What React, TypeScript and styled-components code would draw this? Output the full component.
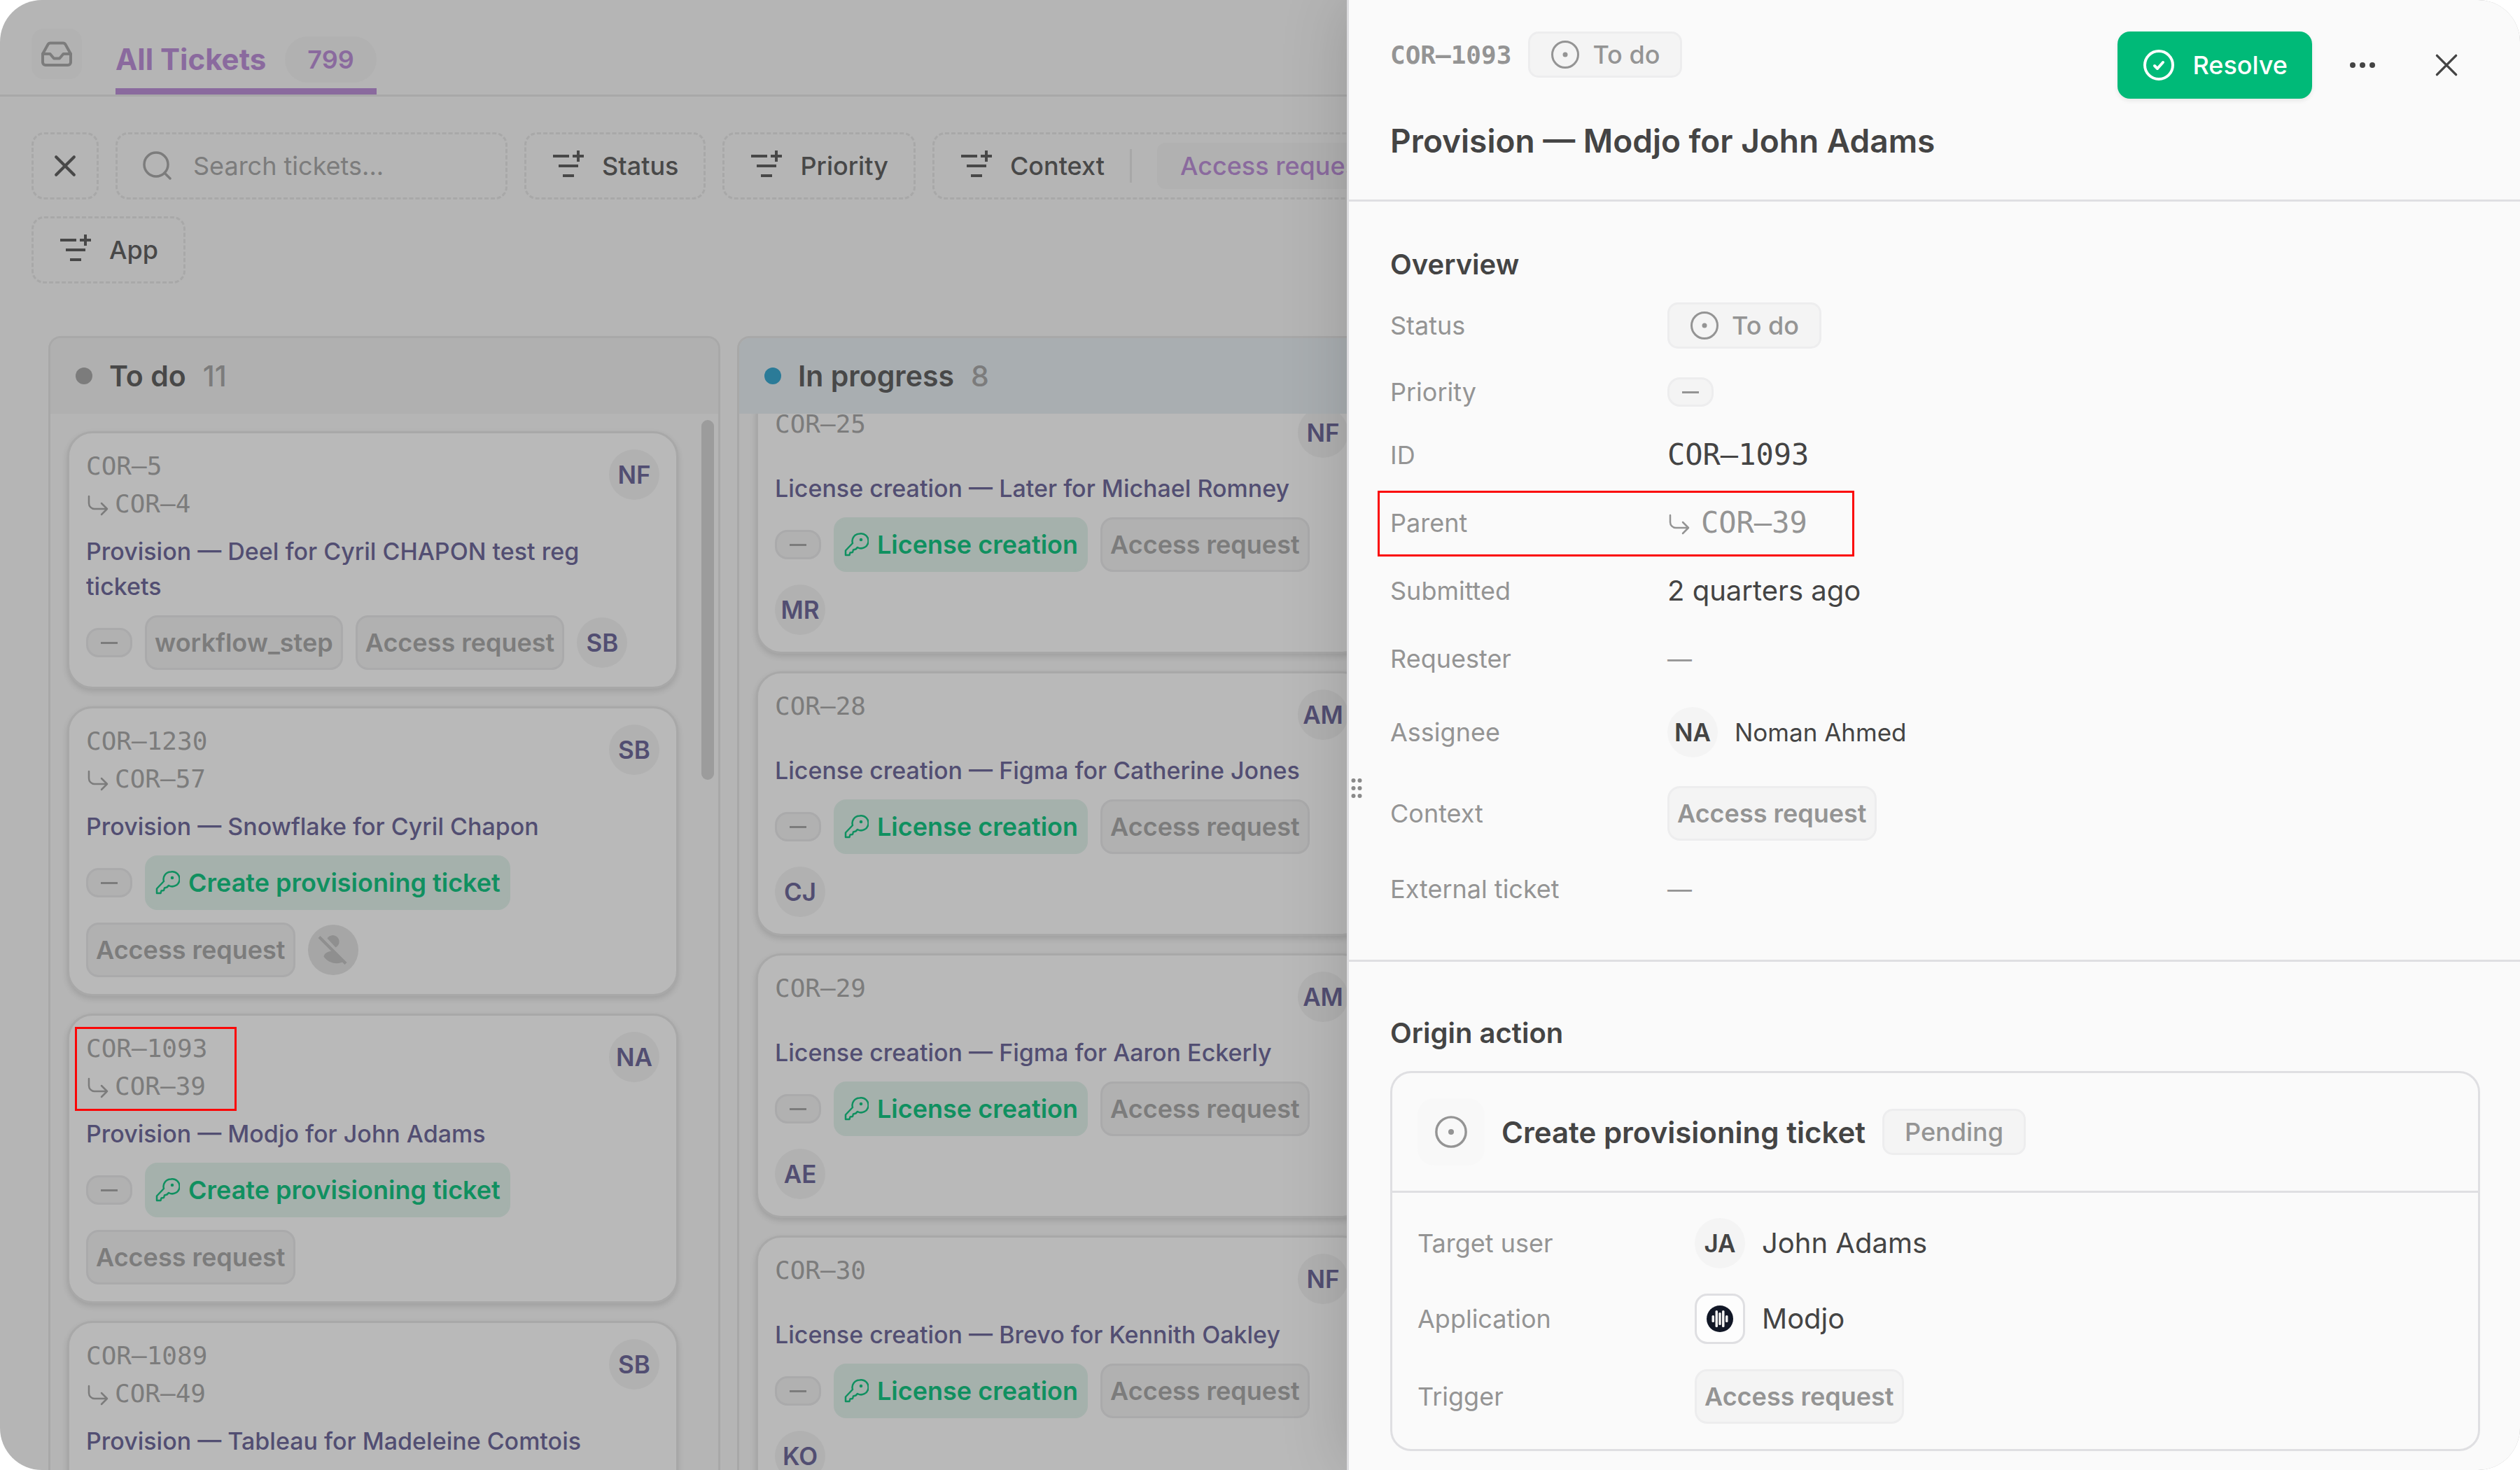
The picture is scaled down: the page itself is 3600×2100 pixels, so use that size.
import React, { useEffect, useRef } from "react";
import styled, { createGlobalStyle, css } from "styled-components";

const sans = `Inter, "Liberation Sans", sans-serif`;
const mono = `"DejaVu Sans Mono", "Liberation Mono", monospace`;

const dim = {
  page: "#b5b5b5",
  card: "#b9b9b9",
  fill: "#b1b1b1",
  line: "#a8a8a8",
  ink: "#484848",
  muted: "#7c7c7c",
  title: "#524e72",
  purple: "#8a6a9e",
  green: "#109060",
  greenFill: "#a5b1ac",
};

const lit = {
  page: "#fafafa",
  fill: "#f4f4f4",
  fillLine: "#ededee",
  line: "#dfdfe2",
  ink: "#444444",
  muted: "#949494",
  green: "#00ba78",
};

const GlobalStyle = createGlobalStyle`
  *, *::before, *::after { box-sizing: border-box; }
  body { margin: 0; background: #ffffff; font-family: ${sans}; }
  h1, h2, h3, p, dl, dt, dd { margin: 0; font-weight: inherit; }
  button, input { font: inherit; color: inherit; border: 0; background: none; padding: 0; margin: 0; }
  svg { display: block; flex: none; }
`;

/* ---------- shell ---------- */

const Frame = styled.div`
  position: relative;
  height: 100vh;
  overflow: hidden;
  border-radius: 60px;
  background: ${dim.page};
`;

const Board = styled.main`
  height: 100%;
  display: flex;
  flex-direction: column;
`;

/* ---------- header ---------- */

const TopBar = styled.header`
  flex: none;
  display: flex;
  align-items: flex-end;
  gap: 48px;
  height: 138px;
  padding: 0 45px;
  border-bottom: 3px solid ${dim.line};
`;

const InboxTile = styled.div`
  display: grid;
  place-items: center;
  width: 72px;
  height: 72px;
  margin-bottom: 22px;
  border-radius: 18px;
  background: #b2b2b2;
  color: ${dim.muted};
`;

const Tab = styled.a`
  display: flex;
  align-items: center;
  gap: 27px;
  padding-bottom: 8px;
  border-bottom: 9px solid ${dim.purple};
  color: ${dim.purple};
  font-size: 42px;
  line-height: 66px;
  font-weight: 700;
  text-decoration: none;
`;

const TabCount = styled.span`
  padding: 0 32px;
  border-radius: 33px;
  background: ${dim.fill};
  font-size: 36px;
  line-height: 66px;
  font-weight: 600;
`;

/* ---------- filters ---------- */

const Filters = styled.div`
  flex: none;
  display: grid;
  gap: 24px;
  padding: 51px 45px 75px;
`;

const FilterRow = styled.div`
  display: flex;
  gap: 24px;
`;

const dashed = css`
  height: 96px;
  border: 3px dashed ${dim.line};
  border-radius: 18px;
`;

const ClearButton = styled.button`
  ${dashed}
  width: 96px;
  display: grid;
  place-items: center;
  color: ${dim.ink};
`;

const SearchBox = styled.label`
  ${dashed}
  display: flex;
  align-items: center;
  gap: 27px;
  width: 560px;
  padding: 0 33px;
  color: ${dim.muted};
`;

const SearchInput = styled.input`
  flex: 1;
  min-width: 0;
  font-size: 36px;
  outline: none;
  &::placeholder {
    color: ${dim.muted};
    opacity: 1;
  }
`;

const FilterButton = styled.button`
  ${dashed}
  display: flex;
  align-items: center;
  gap: 24px;
  padding: 0 36px;
  color: ${dim.ink};
  font-size: 36px;
  font-weight: 500;
  white-space: nowrap;
`;

const FilterRule = styled.span`
  width: 3px;
  height: 48px;
  margin: 0 12px;
  background: ${dim.line};
`;

const FilterValue = styled.span`
  padding: 0 33px;
  border-radius: 12px;
  background: ${dim.fill};
  color: ${dim.purple};
  line-height: 66px;
`;

/* ---------- columns ---------- */

const Columns = styled.div`
  flex: 1;
  min-height: 0;
  display: flex;
  gap: 24px;
  padding-left: 69px;
`;

const ColumnBox = styled.section`
  flex: none;
  width: 960px;
  display: flex;
  flex-direction: column;
  overflow: hidden;
  border: 3px solid ${dim.line};
  border-bottom: 0;
  border-radius: 18px 18px 0 0;
`;

const ColumnHead = styled.header<{ $bg: string }>`
  flex: none;
  display: flex;
  align-items: center;
  gap: 24px;
  height: 108px;
  padding: 0 36px;
  background: ${(p) => p.$bg};
  font-size: 41px;
`;

const Dot = styled.span<{ $color: string }>`
  width: 24px;
  height: 24px;
  border-radius: 50%;
  background: ${(p) => p.$color};
`;

const ColumnName = styled.h2`
  color: ${dim.ink};
  font-size: 41px;
  font-weight: 600;
`;

const ColumnCount = styled.span`
  color: ${dim.muted};
  font-weight: 500;
`;

const ColumnBody = styled.div`
  flex: 1;
  min-height: 0;
  display: flex;
  overflow: hidden;
`;

const CardList = styled.div`
  flex: 1;
  min-width: 0;
  overflow: hidden;
  display: flex;
  flex-direction: column;
  gap: 25px;
  padding: 25px 33px 25px 24px;
`;

const ScrollTrack = styled.div`
  flex: none;
  width: 18px;
  margin: 9px 6px 0 0;
`;

const ScrollThumb = styled.div`
  height: 514px;
  border-radius: 9px;
  background: #9c9c9c;
`;

/* ---------- cards ---------- */

const Card = styled.article`
  flex: none;
  padding: 20px 24px 24px;
  border: 3px solid ${dim.line};
  border-radius: 36px;
  background: ${dim.card};
  box-shadow: 0 4px 8px rgba(0, 0, 0, 0.12);
`;

const CardHead = styled.div`
  display: flex;
  justify-content: space-between;
  align-items: flex-start;
`;

const RefGroup = styled.div`
  position: relative;
  color: ${dim.muted};
  font-family: ${mono};
  font-size: 36px;
  line-height: 54px;
`;

const RefLine = styled.div`
  display: flex;
  align-items: center;
  gap: 5px;
`;

const Avatar = styled.span<{ $bg?: string; $color?: string }>`
  flex: none;
  display: grid;
  place-items: center;
  width: 72px;
  height: 72px;
  border-radius: 50%;
  background: ${(p) => p.$bg ?? dim.fill};
  color: ${(p) => p.$color ?? dim.title};
  font-size: 35px;
  font-weight: 600;
`;

const CardAvatar = styled.div`
  padding: 3px 0;
`;

const CardTitle = styled.h3`
  margin: 16px 0;
  color: ${dim.title};
  font-size: 34px;
  line-height: 50px;
  font-weight: 500;
`;

const Chips = styled.div`
  display: flex;
  flex-wrap: wrap;
  align-items: center;
  gap: 18px;
`;

const Chip = styled.span<{ $tone?: "green" | "lit" }>`
  display: inline-flex;
  align-items: center;
  gap: 12px;
  height: 78px;
  padding: 0 11px;
  border: 3px solid #aaaaab;
  border-radius: 18px;
  background: ${dim.fill};
  color: ${dim.muted};
  font-size: 36px;
  font-weight: 600;
  white-space: nowrap;
  ${(p) =>
    p.$tone === "green" &&
    css`
      border-color: ${dim.greenFill};
      background: ${dim.greenFill};
      color: ${dim.green};
    `}
  ${(p) =>
    p.$tone === "lit" &&
    css`
      border-color: ${lit.fillLine};
      background: ${lit.fill};
      color: ${lit.muted};
    `}
`;

const PriorityPill = styled.span<{ $lit?: boolean }>`
  display: grid;
  place-items: center;
  width: 66px;
  height: 42px;
  border: 3px solid ${(p) => (p.$lit ? lit.fillLine : "#aaaaab")};
  border-radius: 18px;
  background: ${(p) => (p.$lit ? lit.fill : dim.fill)};
  color: ${(p) => (p.$lit ? lit.muted : dim.muted)};
  &::before {
    content: "";
    width: 24px;
    height: 3px;
    background: currentColor;
  }
`;

const Highlight = styled.span<{ $inset: string }>`
  position: absolute;
  inset: ${(p) => p.$inset};
  border: 3px solid #fb0606;
  pointer-events: none;
`;

/* ---------- drawer ---------- */

const Drawer = styled.aside`
  position: absolute;
  top: 0;
  right: 0;
  bottom: 0;
  width: min(100%, 1676px);
  border-left: 3px solid #dcdcdf;
  background: ${lit.page};
  color: ${lit.ink};
  box-shadow: 0 0 90px rgba(0, 0, 0, 0.16);
`;

const Grip = styled.button`
  position: absolute;
  left: 3px;
  top: 1112px;
  color: #8a8a8a;
`;

const DrawerHead = styled.header`
  padding: 45px 57px 51px 59px;
  border-bottom: 3px solid ${lit.line};
`;

const DrawerBar = styled.div`
  display: flex;
  align-items: flex-start;
  justify-content: space-between;
`;

const DrawerRef = styled.div`
  display: flex;
  align-items: center;
  gap: 24px;
  color: ${lit.muted};
  font-family: ${mono};
  font-size: 36px;
  font-weight: 700;
`;

const StatusChip = styled.span`
  display: inline-flex;
  align-items: center;
  gap: 18px;
  height: 66px;
  padding: 0 29px;
  border: 3px solid ${lit.fillLine};
  border-radius: 15px;
  background: ${lit.fill};
  color: ${lit.muted};
  font-family: ${sans};
  font-size: 36px;
  font-weight: 500;
  white-space: nowrap;
`;

const Actions = styled.div`
  display: flex;
  gap: 24px;
`;

const ResolveButton = styled.button`
  display: flex;
  align-items: center;
  gap: 24px;
  height: 96px;
  padding: 0 35px;
  border-radius: 18px;
  background: ${lit.green};
  color: #ffffff;
  font-size: 36px;
  font-weight: 500;
  box-shadow: 0 3px 6px rgba(0, 0, 0, 0.08);
`;

const IconButton = styled.button`
  display: grid;
  place-items: center;
  width: 96px;
  height: 96px;
  color: ${lit.ink};
`;

const DrawerTitle = styled.h1`
  margin-top: 27px;
  font-size: 46px;
  line-height: 66px;
  font-weight: 600;
`;

const Section = styled.section`
  padding: 63px 57px 73px 59px;
  & + & {
    padding-top: 75px;
    border-top: 3px solid ${lit.line};
  }
`;

const SectionTitle = styled.h2`
  margin-bottom: 27px;
  font-size: 40px;
  line-height: 54px;
  font-weight: 600;
`;

const Details = styled.dl<{ $gap: number }>`
  display: grid;
  gap: ${(p) => p.$gap}px;
`;

const Detail = styled.div`
  position: relative;
  display: grid;
  grid-template-columns: 396px 1fr;
  align-items: center;
`;

const Label = styled.dt`
  color: ${lit.muted};
  font-size: 36px;
  line-height: 42px;
`;

const Value = styled.dd<{ $mono?: boolean; $muted?: boolean; $small?: boolean; $gap?: number }>`
  display: flex;
  align-items: center;
  gap: ${(p) => p.$gap ?? 24}px;
  color: ${(p) => (p.$muted ? lit.muted : lit.ink)};
  font-family: ${(p) => (p.$mono ? mono : sans)};
  font-size: ${(p) => (p.$small ? 35 : p.$mono ? 42 : 40)}px;
  line-height: 56px;
`;

const ActionCard = styled.div`
  border: 3px solid ${lit.line};
  border-radius: 30px;
`;

const ActionHead = styled.div`
  display: flex;
  align-items: center;
  gap: 24px;
  padding: 36px;
  border-bottom: 3px solid ${lit.line};
`;

const ActionTile = styled.span`
  display: grid;
  place-items: center;
  width: 96px;
  height: 96px;
  border-radius: 24px;
  background: #f8f8f8;
  color: ${lit.muted};
`;

const ActionName = styled.h3`
  font-size: 42px;
  font-weight: 600;
`;

const ActionBody = styled.div`
  padding: 36px;
`;

const AppTile = styled.span`
  display: grid;
  place-items: center;
  width: 72px;
  height: 72px;
  border: 3px solid ${lit.line};
  border-radius: 18px;
  background: #fdfdfd;
`;

/* ---------- icons ---------- */

const stroke = { fill: "none", stroke: "currentColor", strokeLinecap: "round", strokeLinejoin: "round" } as const;

const InboxIcon = () => (
  <svg width="48" height="48" viewBox="0 0 48 48" {...stroke} strokeWidth="4">
    <path d="M4 24v12a4 4 0 0 0 4 4h32a4 4 0 0 0 4-4V24L36.500 10.500a4 4 0 0 0-3.500-2H15a4 4 0 0 0-3.500 2z" />
    <path d="M4 24h10.500l5.500 6.500h8l5.500-6.500H44" />
  </svg>
);

const CloseIcon = ({ size = 32, weight = 4 }: { size?: number; weight?: number }) => (
  <svg width={size} height={size} viewBox="0 0 30 30" {...stroke} strokeWidth={weight}>
    <path d="M3 3l24 24M27 3L3 27" />
  </svg>
);

const SearchIcon = () => (
  <svg width="48" height="48" viewBox="0 0 48 48" {...stroke} strokeWidth="3.500">
    <circle cx="22" cy="22" r="17" />
    <path d="M34 34l8 8" />
  </svg>
);

const FilterIcon = () => (
  <svg width="48" height="48" viewBox="0 0 48 48" {...stroke} strokeLinecap="butt" strokeWidth="4">
    <path d="M2 10h23M10 24h28M16 38h16M30 10h16M38 2v16" />
  </svg>
);

const ParentIcon = () => (
  <svg width="36" height="36" viewBox="0 0 36 36" {...stroke} strokeWidth="2.500">
    <path d="M4 7v10a8 8 0 0 0 8 8h18M22 17l8 8-8 8" />
  </svg>
);

const KeyIcon = () => (
  <svg width="36" height="36" viewBox="0 0 36 36" {...stroke} strokeWidth="2.500">
    <path d="M23 2.500A10.500 10.500 0 0 0 13 16L3 26.500v6.500h5.500l1-3.500 3.500-.500 1-3.500 3.500-1 2.500-2.500A10.500 10.500 0 1 0 23 2.500z" />
    <circle cx="25" cy="11" r="1.500" fill="currentColor" strokeWidth="1.500" />
  </svg>
);

const NoUserIcon = () => (
  <svg width="48" height="48" viewBox="0 0 48 48" fill="#8f8f8f">
    <path d="M15.500 7.500a9.200 9.200 0 1 1 12 13z" />
    <path d="M24 25.500c-8 0-13 4-13.500 8 5 8 18 13 28.500 7z" />
    <path d="M2.500 7L5.500 4 43.500 42l-3 3z" />
  </svg>
);

const TodoIcon = ({ size = 42 }: { size?: number }) => (
  <svg width={size} height={size} viewBox="0 0 42 42" fill="none" stroke="currentColor" strokeWidth="3">
    <circle cx="21" cy="21" r="18.500" />
    <circle cx="21" cy="21" r="3.500" fill="currentColor" stroke="none" />
  </svg>
);

const CheckIcon = () => (
  <svg width="48" height="48" viewBox="0 0 48 48" {...stroke} strokeWidth="4">
    <circle cx="24" cy="24" r="20" />
    <path d="M18 25l4 4 8-9" />
  </svg>
);

const MoreIcon = () => (
  <svg width="40" height="10" viewBox="0 0 40 10" fill="currentColor">
    <circle cx="6" cy="5" r="4" />
    <circle cx="20" cy="5" r="4" />
    <circle cx="34" cy="5" r="4" />
  </svg>
);

const GripIcon = () => (
  <svg width="16" height="28" viewBox="0 0 16 28" fill="currentColor">
    {[3, 14, 25].map((y) => (
      <React.Fragment key={y}>
        <circle cx="3.500" cy={y} r="3" />
        <circle cx="12.500" cy={y} r="3" />
      </React.Fragment>
    ))}
  </svg>
);

const ModjoIcon = () => (
  <svg width="38" height="38" viewBox="0 0 38 38">
    <circle cx="19" cy="19" r="19" fill="#111726" />
    <g fill="#f2f2f2">
      <rect x="7.500" y="14" width="3.500" height="10" rx="1.500" />
      <rect x="12.500" y="7" width="3.500" height="24" rx="1.500" />
      <rect x="17.200" y="10" width="3.500" height="18" rx="1.500" />
      <rect x="22" y="7" width="3.500" height="24" rx="1.500" />
      <rect x="27" y="14" width="3.500" height="10" rx="1.500" />
    </g>
  </svg>
);

/* ---------- data ---------- */

type Ticket = {
  id: string;
  parent?: string;
  title: string;
  owner: string;
  action?: string;
  tag?: string;
  requester?: string;
  noRequester?: boolean;
  marked?: boolean;
};

const todo: Ticket[] = [
  { id: "COR–5", parent: "COR–4", title: "Provision — Deel for Cyril CHAPON test reg tickets", owner: "NF", tag: "workflow_step", requester: "SB" },
  { id: "COR–1230", parent: "COR–57", title: "Provision — Snowflake for Cyril Chapon", owner: "SB", action: "Create provisioning ticket", noRequester: true },
  { id: "COR–1093", parent: "COR–39", title: "Provision — Modjo for John Adams", owner: "NA", action: "Create provisioning ticket", marked: true },
  { id: "COR–1089", parent: "COR–49", title: "Provision — Tableau for Madeleine Comtois", owner: "SB" },
];

const inProgress: Ticket[] = [
  { id: "COR–25", title: "License creation — Later for Michael Romney", owner: "NF", action: "License creation", requester: "MR" },
  { id: "COR–28", title: "License creation — Figma for Catherine Jones", owner: "AM", action: "License creation", requester: "CJ" },
  { id: "COR–29", title: "License creation — Figma for Aaron Eckerly", owner: "AM", action: "License creation", requester: "AE" },
  { id: "COR–30", title: "License creation — Brevo for Kennith Oakley", owner: "NF", action: "License creation", requester: "KO" },
];

const TicketCard = ({ t }: { t: Ticket }) => (
  <Card>
    <CardHead>
      <RefGroup>
        <div>{t.id}</div>
        {t.parent && (
          <RefLine>
            <ParentIcon />
            {t.parent}
          </RefLine>
        )}
        {t.marked && <Highlight $inset="-4px -42px -8px -16px" />}
      </RefGroup>
      <CardAvatar>
        <Avatar>{t.owner}</Avatar>
      </CardAvatar>
    </CardHead>
    <CardTitle>{t.title}</CardTitle>
    <Chips>
      <PriorityPill />
      {t.tag && <Chip>{t.tag}</Chip>}
      {t.action && (
        <Chip $tone="green">
          <KeyIcon />
          {t.action}
        </Chip>
      )}
      <Chip>Access request</Chip>
      {t.requester && <Avatar>{t.requester}</Avatar>}
      {t.noRequester && (
        <Avatar $bg="#a6a6a6">
          <NoUserIcon />
        </Avatar>
      )}
    </Chips>
  </Card>
);

type ColumnProps = { name: string; count: number; dot: string; bg: string; tickets: Ticket[]; scrolled?: number };

const Column = ({ name, count, dot, bg, tickets, scrolled = 0 }: ColumnProps) => {
  const list = useRef<HTMLDivElement>(null);
  useEffect(() => {
    if (list.current) list.current.scrollTop = scrolled;
  }, [scrolled]);
  return (
    <ColumnBox>
      <ColumnHead $bg={bg}>
        <Dot $color={dot} />
        <ColumnName>{name}</ColumnName>
        <ColumnCount>{count}</ColumnCount>
      </ColumnHead>
      <ColumnBody>
        <CardList ref={list}>
          {tickets.map((t) => (
            <TicketCard key={t.id} t={t} />
          ))}
        </CardList>
        <ScrollTrack>
          <ScrollThumb />
        </ScrollTrack>
      </ColumnBody>
    </ColumnBox>
  );
};

const TicketDrawer = () => (
  <Drawer aria-label="Ticket details">
    <Grip aria-label="Resize panel">
      <GripIcon />
    </Grip>
    <DrawerHead>
      <DrawerBar>
        <DrawerRef>
          COR–1093
          <StatusChip>
            <TodoIcon />
            To do
          </StatusChip>
        </DrawerRef>
        <Actions>
          <ResolveButton>
            <CheckIcon />
            Resolve
          </ResolveButton>
          <IconButton aria-label="More actions">
            <MoreIcon />
          </IconButton>
          <IconButton aria-label="Close">
            <CloseIcon size={34} weight={3} />
          </IconButton>
        </Actions>
      </DrawerBar>
      <DrawerTitle>Provision — Modjo for John Adams</DrawerTitle>
    </DrawerHead>
    <Section>
      <SectionTitle>Overview</SectionTitle>
      <Details $gap={41}>
        <Detail>
          <Label>Status</Label>
          <Value>
            <StatusChip>
              <TodoIcon />
              To do
            </StatusChip>
          </Value>
        </Detail>
        <Detail>
          <Label>Priority</Label>
          <Value>
            <PriorityPill $lit />
          </Value>
        </Detail>
        <Detail>
          <Label>ID</Label>
          <Value $mono>COR–1093</Value>
        </Detail>
        <Detail>
          <Label>Parent</Label>
          <Value $mono $muted $gap={12}>
            <ParentIcon />
            COR–39
          </Value>
          <Highlight $inset="-18px 894px -20px -18px" />
        </Detail>
        <Detail>
          <Label>Submitted</Label>
          <Value>2 quarters ago</Value>
        </Detail>
        <Detail>
          <Label>Requester</Label>
          <Value $muted $small>
            —
          </Value>
        </Detail>
        <Detail>
          <Label>Assignee</Label>
          <Value $small>
            <Avatar $bg={lit.fill} $color={lit.ink}>
              NA
            </Avatar>
            Noman Ahmed
          </Value>
        </Detail>
        <Detail>
          <Label>Context</Label>
          <Value>
            <Chip $tone="lit">Access request</Chip>
          </Value>
        </Detail>
        <Detail>
          <Label>External ticket</Label>
          <Value $muted $small>
            —
          </Value>
        </Detail>
      </Details>
    </Section>
    <Section>
      <SectionTitle>Origin action</SectionTitle>
      <ActionCard>
        <ActionHead>
          <ActionTile>
            <TodoIcon size={48} />
          </ActionTile>
          <ActionName>Create provisioning ticket</ActionName>
          <StatusChip>Pending</StatusChip>
        </ActionHead>
        <ActionBody>
          <Details $gap={36}>
            <Detail>
              <Label>Target user</Label>
              <Value>
                <Avatar $bg={lit.fill} $color={lit.ink}>
                  JA
                </Avatar>
                John Adams
              </Value>
            </Detail>
            <Detail>
              <Label>Application</Label>
              <Value>
                <AppTile>
                  <ModjoIcon />
                </AppTile>
                Modjo
              </Value>
            </Detail>
            <Detail>
              <Label>Trigger</Label>
              <Value>
                <Chip $tone="lit">Access request</Chip>
              </Value>
            </Detail>
          </Details>
        </ActionBody>
      </ActionCard>
    </Section>
  </Drawer>
);

export default function App() {
  return (
    <>
      <GlobalStyle />
      <Frame>
        <Board>
          <TopBar>
            <InboxTile>
              <InboxIcon />
            </InboxTile>
            <Tab href="#all">
              All Tickets
              <TabCount>799</TabCount>
            </Tab>
          </TopBar>
          <Filters>
            <FilterRow>
              <ClearButton aria-label="Clear filters">
                <CloseIcon />
              </ClearButton>
              <SearchBox>
                <SearchIcon />
                <SearchInput type="text" aria-label="Search tickets" placeholder="Search tickets..." />
              </SearchBox>
              <FilterButton>
                <FilterIcon />
                Status
              </FilterButton>
              <FilterButton>
                <FilterIcon />
                Priority
              </FilterButton>
              <FilterButton>
                <FilterIcon />
                Context
                <FilterRule />
                <FilterValue>Access request</FilterValue>
              </FilterButton>
            </FilterRow>
            <FilterRow>
              <FilterButton>
                <FilterIcon />
                App
              </FilterButton>
            </FilterRow>
          </Filters>
          <Columns>
            <Column name="To do" count={11} dot="#7c7c7c" bg="#b0b0b0" tickets={todo} />
            <Column name="In progress" count={8} dot="#2b7b98" bg="#a9aeb1" tickets={inProgress} scrolled={60} />
          </Columns>
        </Board>
        <TicketDrawer />
      </Frame>
    </>
  );
}
